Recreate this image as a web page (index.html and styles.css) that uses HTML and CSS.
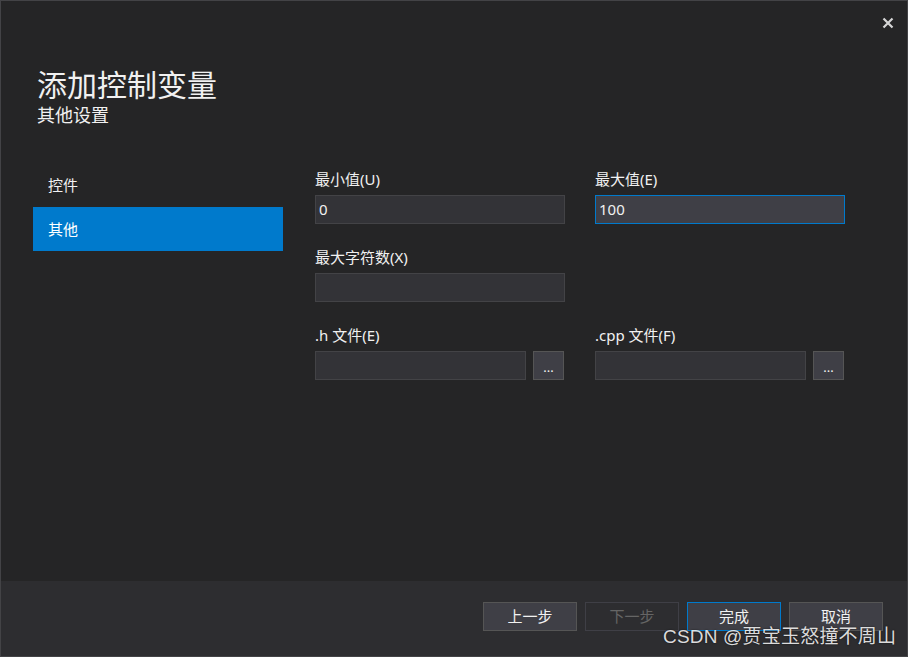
FILE: index.html
```html
<!DOCTYPE html>
<html lang="zh-CN">
<head>
<meta charset="utf-8">
<title>添加控制变量</title>
<link rel="stylesheet" href="styles.css">
</head>
<body>
<div class="window">
  <div class="main">
    <div class="topbar">
      <button class="close" aria-label="关闭">
        <svg width="12" height="12" viewBox="0 0 12 12"><path d="M1.5 1.5 L10.5 10.5 M10.5 1.5 L1.5 10.5" stroke="#d6d6d6" stroke-width="2.2" fill="none"/></svg>
      </button>
    </div>
    <div class="header">
      <div class="title">添加控制变量</div>
      <div class="subtitle">其他设置</div>
    </div>
    <div class="content">
      <ul class="nav">
        <li class="nav-item">控件</li>
        <li class="nav-item active">其他</li>
      </ul>
      <div class="form">
        <div class="field">
          <div class="label">最小值(U)</div>
          <div class="input">0</div>
        </div>
        <div class="field">
          <div class="label">最大值(E)</div>
          <div class="input focused">100</div>
        </div>
        <div class="field">
          <div class="label">最大字符数(X)</div>
          <div class="input"></div>
        </div>
        <div class="field empty"></div>
        <div class="field">
          <div class="label">.h 文件(E)</div>
          <div class="file-row">
            <div class="input grow"></div>
            <div class="browse">...</div>
          </div>
        </div>
        <div class="field">
          <div class="label">.cpp 文件(F)</div>
          <div class="file-row">
            <div class="input grow"></div>
            <div class="browse">...</div>
          </div>
        </div>
      </div>
    </div>
  </div>
  <div class="footer">
    <div class="btn">上一步</div>
    <div class="btn disabled">下一步</div>
    <div class="btn primary">完成</div>
    <div class="btn">取消</div>
  </div>
  <div class="watermark">CSDN @贾宝玉怒撞不周山</div>
</div>
</body>
</html>
```
FILE: styles.css
```css
html, body {
  margin: 0;
  padding: 0;
  background: #252526;
}
body {
  font-family: "Noto Sans", "Noto Sans CJK SC", sans-serif;
  color: #f1f1f1;
}
.window {
  position: relative;
  width: 908px;
  height: 657px;
  box-sizing: border-box;
  border: 1px solid #434346;
  background: #252526;
  display: flex;
  flex-direction: column;
  overflow: hidden;
}
.main {
  flex: 1;
  display: flex;
  flex-direction: column;
}
.topbar {
  height: 0;
  position: relative;
}
.close {
  position: absolute;
  right: 7px;
  top: 11px;
  width: 24px;
  height: 22px;
  padding: 0;
  border: 0;
  background: transparent;
  display: flex;
  align-items: center;
  justify-content: center;
}
.header {
  padding: 65px 0 0 36px;
}
.title {
  font-family: "Noto Sans CJK SC", sans-serif;
  font-size: 30px;
  line-height: 34px;
  color: #f1f1f1;
}
.subtitle {
  font-family: "Noto Sans CJK SC", sans-serif;
  font-size: 18px;
  line-height: 22px;
  margin-top: 3px;
  color: #f1f1f1;
}
.content {
  display: flex;
  margin-top: 38px;
  padding-left: 32px;
  gap: 32px;
}
.nav {
  list-style: none;
  margin: 0;
  padding: 0;
  width: 250px;
}
.nav-item {
  height: 44px;
  line-height: 44px;
  padding-left: 15px;
  font-size: 15px;
  color: #f1f1f1;
}
.nav-item.active {
  background: #007acc;
  color: #ffffff;
}
.form {
  display: grid;
  grid-template-columns: 250px 250px;
  column-gap: 30px;
  row-gap: 23px;
  margin-top: 6px;
}
.label {
  font-size: 15px;
  line-height: 20px;
  margin-bottom: 6px;
  color: #f1f1f1;
  white-space: nowrap;
}
.input {
  height: 29px;
  box-sizing: border-box;
  border: 1px solid #434346;
  background: #333337;
  font-size: 15px;
  line-height: 27px;
  padding-left: 3px;
  color: #f1f1f1;
}
.input.focused {
  border-color: #007acc;
  background: #3f3f46;
}
.file-row {
  display: flex;
  gap: 7px;
  padding-right: 1px;
}
.grow {
  flex: 1;
}
.browse {
  width: 31px;
  height: 29px;
  box-sizing: border-box;
  border: 1px solid #555555;
  background: #3f3f46;
  color: #f1f1f1;
  font-size: 13px;
  line-height: 30px;
  text-align: center;
}
.footer {
  height: 75px;
  background: #2d2d30;
  display: flex;
  justify-content: flex-end;
  align-items: flex-start;
  padding: 21px 24px 0 0;
  box-sizing: border-box;
  gap: 8px;
}
.btn {
  width: 94px;
  height: 29px;
  box-sizing: border-box;
  border: 1px solid #555555;
  background: #3f3f46;
  color: #f1f1f1;
  font-size: 15px;
  line-height: 27px;
  text-align: center;
}
.btn.disabled {
  background: #2d2d30;
  border-color: #3f3f46;
  color: #656565;
}
.btn.primary {
  border-color: #007acc;
}
.watermark {
  position: absolute;
  left: 662px;
  top: 624px;
  font-family: "Liberation Sans", "Noto Sans CJK SC", sans-serif;
  font-size: 19px;
  line-height: 24px;
  letter-spacing: 0.2px;
  color: rgba(255, 255, 255, 0.85);
  text-shadow: 0 0 2px rgba(0, 0, 0, 0.6);
  white-space: nowrap;
}
```
